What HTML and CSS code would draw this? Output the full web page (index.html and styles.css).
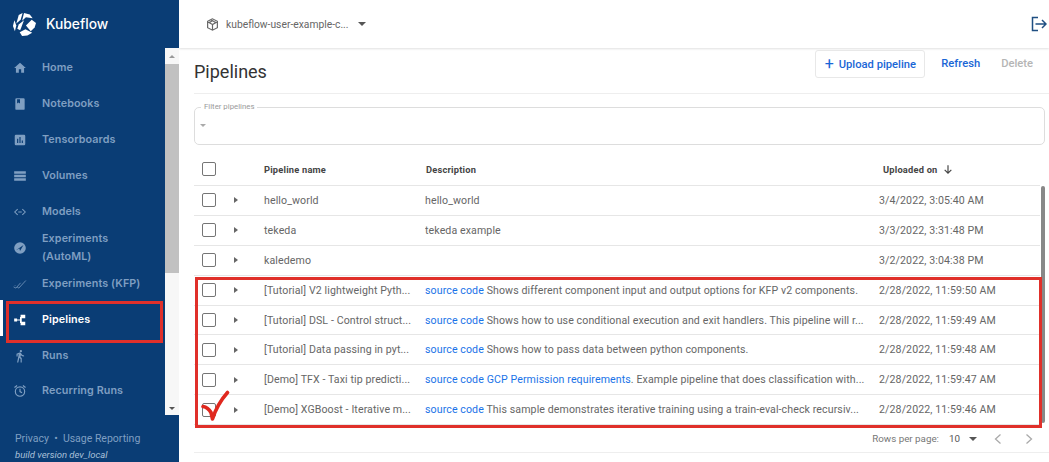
FILE: index.html
```html
<!DOCTYPE html>
<html lang="en">
<head>
<meta charset="utf-8">
<title>Kubeflow Pipelines</title>
<link rel="stylesheet" href="styles.css">
</head>
<body>
<div class="app">
  <aside class="sidebar">
    <div class="brand">
      <svg class="logo" width="25" height="25" viewBox="0 0 26 26"><g fill="#fff"><path d="M7 3 11 1 9 8 4.500 12z"/><path d="M12.500 1 18.500 2.500 21.500 6.500 14.500 5.500 10.500 9z"/><path d="M2.500 8.500 4.500 14 3 20 1 14.500z"/><path d="M20.500 8 25 11.500 23.500 16 19.500 20 14.500 14z"/><path d="M7 13 12.500 8.500 8.500 19 5.500 17.500z"/><path d="M8 21 14 18 21 21.500 16 24.500 10.500 25z"/></g></svg>
      <span class="brand-name">Kubeflow</span>
    </div>
    <div class="side-body">
      <nav class="nav">
        <a class="nav-item"><svg class="ni" viewBox="0 0 24 24"><path d="M10 20v-6h4v6h5v-8h3L12 3 2 12h3v8z"/></svg><span>Home</span></a>
        <a class="nav-item"><svg class="ni" viewBox="0 0 24 24"><path d="M6 2h12a2 2 0 0 1 2 2v16a2 2 0 0 1-2 2H6a2 2 0 0 1-2-2V4a2 2 0 0 1 2-2zm1 2v7l2.500-1.500L12 11V4z" fill-rule="evenodd"/></svg><span>Notebooks</span></a>
        <a class="nav-item"><svg class="ni" viewBox="0 0 24 24"><path d="M5 3h14a2 2 0 0 1 2 2v14a2 2 0 0 1-2 2H5a2 2 0 0 1-2-2V5a2 2 0 0 1 2-2zm2 14h2v-7H7zm4 0h2V7h-2zm4 0h2v-4h-2z" fill-rule="evenodd"/></svg><span>Tensorboards</span></a>
        <a class="nav-item"><svg class="ni" viewBox="0 0 24 24"><path d="M2 20h20v-4H2zm0-6h20v-4H2zm0-6h20V4H2z"/></svg><span>Volumes</span></a>
        <a class="nav-item"><svg class="ni" viewBox="0 0 24 24"><path d="M8 7 3 12l5 5M16 7l5 5-5 5M9 12h6" fill="none" stroke="#7f9fc2" stroke-width="1.800"/></svg><span>Models</span></a>
        <a class="nav-item two"><svg class="ni" viewBox="0 0 24 24"><circle cx="12" cy="12" r="10"/><path d="m5 16 13-9-6 10-1-4z" fill="#0a3d75"/></svg><span>Experiments<br>(AutoML)</span></a>
        <a class="nav-item"><svg class="ni" viewBox="0 0 24 24"><path d="m1 17 4 2L13 10M7 17l3 2 12-13M3 14l1 1" fill="none" stroke="#7f9fc2" stroke-width="1.300"/></svg><span>Experiments (KFP)</span></a>
        <a class="nav-item active"><svg class="ni" viewBox="0 0 24 24"><path d="M13 3h8v6h-8zM13 15h8v6h-8zM2 9.500h5v5H2zM7 11h6v2H7zM12 7h3v10h-3z"/></svg><span>Pipelines</span></a>
        <a class="nav-item"><svg class="ni" viewBox="0 0 24 24"><path d="M13.500 5.500a2 2 0 1 0 0-4 2 2 0 0 0 0 4zM9.800 8.900 7 23h2.100l1.800-8 2.100 2v6h2v-7.500l-2.100-2 .6-3A7.300 7.300 0 0 0 19 13v-2c-1.900 0-3.500-1-4.300-2.400l-1-1.600c-.4-.6-1-1-1.700-1-.3 0-.5.100-.8.100L6 8.300V13h2V9.600z"/></svg><span>Runs</span></a>
        <a class="nav-item"><svg class="ni" viewBox="0 0 24 24"><circle cx="12" cy="13" r="8" fill="none" stroke="#7f9fc2" stroke-width="2"/><path d="M12 8v5l3.500 2M2.500 6 7 2.500M21.500 6 17 2.500" fill="none" stroke="#7f9fc2" stroke-width="2"/></svg><span>Recurring Runs</span></a>
      </nav>
      <div class="side-scroll"><span class="arrow-wrap"><i class="arrow-up"></i></span><span class="thumb"></span><span class="arrow-down"></span></div>
    </div>
    <footer class="side-foot">
      <div>Privacy &nbsp;•&nbsp; Usage Reporting</div>
      <div class="build">build version dev_local</div>
    </footer>
    <div class="active-bar"></div>
    <div class="red-box side-red"></div>
  </aside>
  <main class="main">
    <header class="topbar">
      <div class="ns">
        <svg class="cube" width="13" height="13" viewBox="0 0 24 24"><path d="M12 1.500 3 6v12l9 4.500 9-4.500V6zM12 12 5.500 8.500 12 5.200l6.500 3.300zM12 12v9M9 3.500l6.500 3.500" fill="none" stroke="#666" stroke-width="2.200"/></svg>
        <span class="ns-name">kubeflow-user-example-c...</span>
        <span class="caret ns-caret"></span>
      </div>
      <svg class="logout" width="16" height="16" viewBox="0 0 16 16"><path d="M7 1.500H1.500v13H7M4.500 8H15M11 4l4 4-4 4" fill="none" stroke="#1f4f82" stroke-width="1.500"/></svg>
    </header>
    <section class="page">
      <div class="title-row">
        <h1 class="title">Pipelines</h1>
        <div class="actions">
          <button class="btn upload"><span class="plus">+</span>Upload pipeline</button>
          <button class="btn refresh">Refresh</button>
          <button class="btn delete">Delete</button>
        </div>
      </div>
      <fieldset class="filter">
        <legend>Filter pipelines</legend>
        <span class="caret small"></span>
      </fieldset>
      <div class="table">
        <div class="row head">
          <span class="c-check"><i class="box"></i></span>
          <span class="c-exp"></span>
          <span class="c-name">Pipeline name</span>
          <span class="c-desc">Description</span>
          <span class="c-date">Uploaded on <svg class="sort" width="10" height="11" viewBox="0 0 12 12"><path d="M6 1v9M2 6.500 6 10.500l4-4" fill="none" stroke="#444" stroke-width="1.400"/></svg></span>
        </div>
        <div class="row"><span class="c-check"><i class="box"></i></span><span class="c-exp"><i class="tri"></i></span><span class="c-name">hello_world</span><span class="c-desc">hello_world</span><span class="c-date">3/4/2022, 3:05:40 AM</span></div>
        <div class="row"><span class="c-check"><i class="box"></i></span><span class="c-exp"><i class="tri"></i></span><span class="c-name">tekeda</span><span class="c-desc">tekeda example</span><span class="c-date">3/3/2022, 3:31:48 PM</span></div>
        <div class="row"><span class="c-check"><i class="box"></i></span><span class="c-exp"><i class="tri"></i></span><span class="c-name">kaledemo</span><span class="c-desc"></span><span class="c-date">3/2/2022, 3:04:38 PM</span></div>
        <div class="row"><span class="c-check"><i class="box"></i></span><span class="c-exp"><i class="tri"></i></span><span class="c-name">[Tutorial] V2 lightweight Pyth...</span><span class="c-desc"><a>source code</a> Shows different component input and output options for KFP v2 components.</span><span class="c-date">2/28/2022, 11:59:50 AM</span></div>
        <div class="row"><span class="c-check"><i class="box"></i></span><span class="c-exp"><i class="tri"></i></span><span class="c-name">[Tutorial] DSL - Control struct...</span><span class="c-desc"><a>source code</a> Shows how to use conditional execution and exit handlers. This pipeline will r...</span><span class="c-date">2/28/2022, 11:59:49 AM</span></div>
        <div class="row"><span class="c-check"><i class="box"></i></span><span class="c-exp"><i class="tri"></i></span><span class="c-name">[Tutorial] Data passing in pyt...</span><span class="c-desc"><a>source code</a> Shows how to pass data between python components.</span><span class="c-date">2/28/2022, 11:59:48 AM</span></div>
        <div class="row"><span class="c-check"><i class="box"></i></span><span class="c-exp"><i class="tri"></i></span><span class="c-name">[Demo] TFX - Taxi tip predicti...</span><span class="c-desc"><a>source code</a> <a>GCP Permission requirements</a>. Example pipeline that does classification with...</span><span class="c-date">2/28/2022, 11:59:47 AM</span></div>
        <div class="row"><span class="c-check"><i class="box"></i></span><span class="c-exp"><i class="tri"></i></span><span class="c-name">[Demo] XGBoost - Iterative m...</span><span class="c-desc"><a>source code</a> This sample demonstrates iterative training using a train-eval-check recursiv...</span><span class="c-date">2/28/2022, 11:59:46 AM</span></div>
      </div>
      <div class="pager">
        <span class="rpp">Rows per page:</span><span class="rpp-val">10</span><span class="caret"></span>
        <svg class="chev" width="10" height="12" viewBox="0 0 10 12"><path d="M7.500 1.500 2.500 6l5 4.500" fill="none" stroke="#aaa" stroke-width="1.300"/></svg>
        <svg class="chev" width="10" height="12" viewBox="0 0 10 12"><path d="M2.500 1.500 7.500 6l-5 4.500" fill="none" stroke="#aaa" stroke-width="1.300"/></svg>
      </div>
    </section>
    <div class="table-scroll"></div>
    <div class="red-box table-red"></div>
    <svg class="tick" width="30" height="34" viewBox="0 0 30 34"><path d="M3 16.500C6 17 9 19 11 22.500L12.500 29C15 21 20 11 27.500 2.500" fill="none" stroke="#e0281e" stroke-width="3.600" stroke-linecap="round" stroke-linejoin="round"/></svg>
  </main>
</div>
</body>
</html>
```
FILE: styles.css
```css
* { box-sizing: border-box; }
html, body { margin: 0; height: 100%; background: #fff; overflow: hidden; }
body { font-family: Roboto, "Liberation Sans", sans-serif; color: #666; }
.app { display: flex; width: 1049px; height: 462px; position: relative; }

.sidebar { width: 179px; flex: none; background: #0a3d75; display: flex; flex-direction: column; position: relative; }
.brand { height: 48px; flex: none; display: flex; align-items: center; gap: 9px; padding-left: 12px; }
.brand-name { font-family: Inter, sans-serif; font-weight: 500; font-size: 13.800px; color: #fff; }
.side-body { height: 367px; flex: none; display: flex; }
.nav { flex: 1; display: flex; flex-direction: column; padding-top: 2.500px; }
.nav-item { height: 35.900px; flex: none; display: flex; align-items: center; gap: 15px; padding-left: 13px; font-family: Inter, sans-serif; font-weight: 600; font-size: 10.750px; letter-spacing: .1px; color: #7f9fc2; line-height: 18px; }
.nav-item.active { color: #fff; }
.ni { width: 14px; height: 14px; flex: none; fill: #7f9fc2; }
.active .ni { fill: #fff; }
.side-scroll { width: 14px; flex: none; background: #f7f7f7; display: flex; flex-direction: column; align-items: center; }
.arrow-wrap { height: 16px; flex: none; display: flex; align-items: center; justify-content: center; }
.arrow-up { width: 0; height: 0; border: 3px solid transparent; border-bottom-color: #999; border-top-width: 0; }
.thumb { width: 100%; height: 209px; flex: none; background: #c1c1c1; }
.arrow-down { width: 0; height: 0; margin-top: auto; margin-bottom: 5px; border: 3px solid transparent; border-top-color: #555; border-bottom-width: 0; }
.side-foot { padding: 16px 0 0 15px; font-size: 10.500px; color: #7f9fc2; line-height: 16px; }
.build { font-style: italic; font-size: 9.500px; color: #a9c0d9; }
.active-bar { position: absolute; left: 0; top: 300px; width: 3px; height: 36px; background: #fff; }

.red-box { position: absolute; border: 3px solid #e0302a; }
.side-red { left: 6px; top: 301px; width: 157px; height: 42px; }
.table-red { left: 195px; top: 277px; width: 847px; height: 151px; }
.tick { position: absolute; left: 200px; top: 390px; }
.table-scroll { position: absolute; left: 1041px; top: 186px; width: 4px; height: 237px; background: #888; border-radius: 2px; }

.main { flex: 1; display: flex; flex-direction: column; min-width: 0; }
.topbar { height: 48px; flex: none; display: flex; align-items: center; justify-content: space-between; padding: 0 2px 0 27px; box-shadow: 0 1px 2px rgba(0,0,0,.12); }
.ns { display: flex; align-items: center; gap: 7px; }
.ns-name { font-size: 10.300px; color: #666; }
.caret { display: inline-block; width: 0; height: 0; border: 4px solid transparent; border-top: 4px solid #555; border-bottom-width: 0; }
.ns-caret { margin-left: 2px; }

.page { flex: 1; display: flex; flex-direction: column; padding-left: 15px; min-height: 0; }
.title-row { height: 46px; flex: none; display: flex; justify-content: space-between; border-bottom: 1px solid #eee; padding-right: 16px; }
.title { margin: 12px 0 0; font-size: 18px; font-weight: 400; color: #333; line-height: 24px; }
.actions { display: flex; align-items: flex-start; }
.btn { font-family: Roboto, sans-serif; font-size: 11.200px; font-weight: 500; background: none; border: 0; padding: 0; color: #1a66d6; }
.upload { display: flex; align-items: center; height: 28px; width: 110px; margin-top: 2px; justify-content: center; gap: 5px; border: 1px solid #e8e8e8; border-radius: 3px; }
.plus { font-size: 16px; font-weight: 400; line-height: 1; }
.refresh { margin: 9px 0 0 16px; }
.delete { margin: 9px 0 0 21px; color: #b5b5b5; }
.filter { margin: 9px 4px 0 0; height: 42px; border: 1px solid #ddd; border-radius: 5px; padding: 0 0 0 5px; flex: none; }
.filter legend { font-size: 7.800px; color: #9a9a9a; padding: 0 3px; margin-left: 1px; line-height: 8px; }
.filter .small { border-width: 3px; border-top-color: #aaa; border-bottom-width: 0; margin-top: 13px; display: block; }

.table { margin: 8px 9px 0 0; flex: none; }
.row { display: flex; align-items: center; height: 29.900px; border-bottom: 1px solid #e6e6e6; font-size: 10.600px; letter-spacing: .1px; }
.row.head { height: 33px; font-weight: 700; font-size: 9.300px; letter-spacing: .2px; color: #444; }
.c-check { width: 40px; padding-left: 8px; flex: none; display: flex; }
.c-exp { width: 30px; flex: none; display: flex; }
.c-name { width: 161px; flex: none; white-space: nowrap; }
.c-desc { width: 454px; flex: none; white-space: nowrap; overflow: hidden; }
.head .c-desc { padding-left: 1px; }
.c-date { flex: 1; white-space: nowrap; display: flex; align-items: center; gap: 5px; }
.head .c-date { padding-left: 4px; }
.c-desc a { color: #1a73e8; }
.box { width: 14px; height: 14px; border: 1.500px solid #757575; border-radius: 2px; display: block; }
.tri { width: 0; height: 0; border: 3.500px solid transparent; border-left: 4px solid #666; border-right-width: 0; display: block; }

.pager { height: 28px; flex: none; display: flex; align-items: center; justify-content: flex-end; padding-right: 15px; font-size: 9.800px; color: #777; border-bottom: 1px solid #eee; }
.rpp-val { margin-left: 10px; margin-right: 9px; color: #555; }
.chev { margin-left: 16px; }
.chev + .chev { margin-left: 21px; }
```
